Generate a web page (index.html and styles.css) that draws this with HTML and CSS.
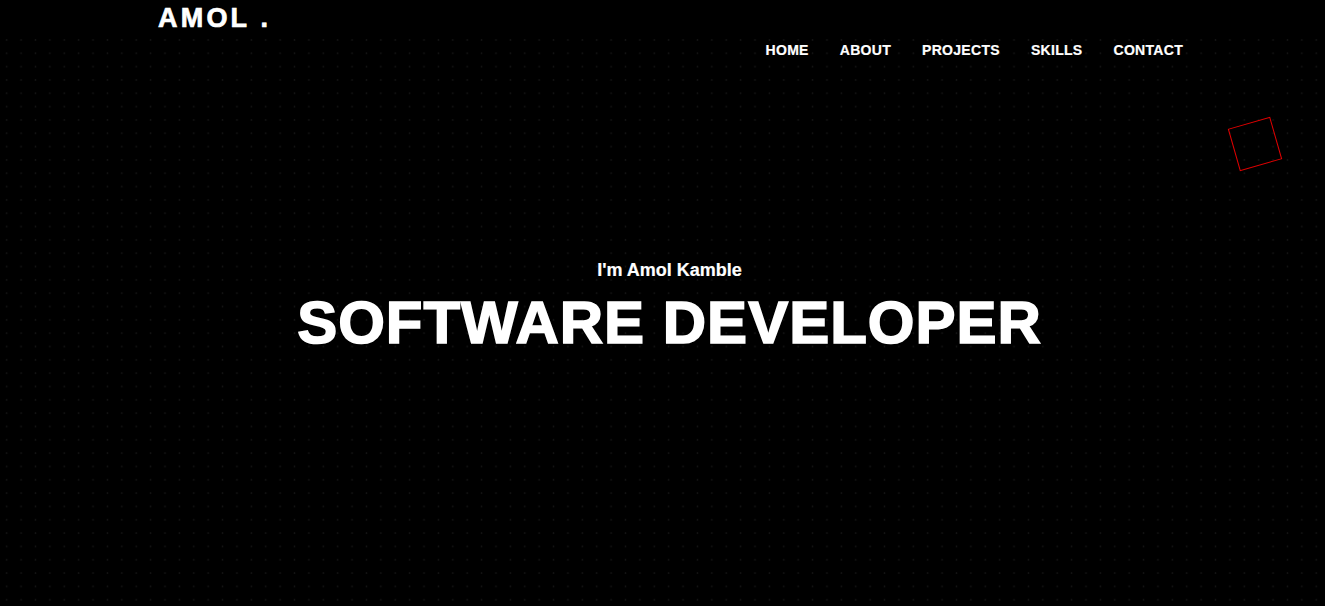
FILE: index.html
```html
<!DOCTYPE html>
<html lang="en">
<head>
<meta charset="utf-8">
<title>Amol Kamble</title>
<link rel="stylesheet" href="styles.css">
</head>
<body>
<div class="page">
  <header class="header">
    <div class="logo">AMOL .</div>
    <nav class="nav">
      <a href="#">HOME</a>
      <a href="#">ABOUT</a>
      <a href="#">PROJECTS</a>
      <a href="#">SKILLS</a>
      <a href="#">CONTACT</a>
    </nav>
  </header>
  <div class="shape"></div>
  <section class="hero">
    <p class="intro">I'm Amol Kamble</p>
    <h1 class="title">SOFTWARE DEVELOPER</h1>
  </section>
</div>
</body>
</html>
```

FILE: styles.css
```css
html, body {
  margin: 0;
  padding: 0;
  background: #000;
}
body {
  font-family: "Liberation Sans", Arial, sans-serif;
  color: #fff;
  width: 1325px;
  height: 606px;
  overflow: hidden;
}
.page {
  position: relative;
  height: 606px;
  background-color: #000;
  background-image: radial-gradient(circle at center, #171717 0, #121212 0.7px, rgba(0,0,0,0) 1.2px);
  background-size: 14.4px 13.33px;
  background-position: -0.5px 33.3px;
  background-repeat: repeat;
}
.page::before {
  content: "";
  position: absolute;
  left: 0;
  top: 0;
  right: 0;
  height: 34px;
  background: #000;
}
.header {
  position: relative;
  display: flex;
  justify-content: space-between;
  align-items: flex-start;
  padding: 0 142px 0 157px;
}
.logo {
  font-weight: 700;
  font-size: 27px;
  line-height: 36px;
  letter-spacing: 3.2px;
  -webkit-text-stroke: 0.7px #fff;
  padding-left: 1px;
}
.nav {
  display: flex;
  gap: 31px;
  padding-top: 41px;
}
.nav a {
  color: #fff;
  text-decoration: none;
  font-weight: 700;
  font-size: 14px;
  letter-spacing: 0.3px;
  line-height: 18px;
  -webkit-text-stroke: 0.2px #fff;
}
.shape {
  position: absolute;
  left: 1233px;
  top: 122px;
  width: 42px;
  height: 42px;
  border: 1px solid #e00000;
  transform: rotate(-16deg);
}
.hero {
  display: flex;
  flex-direction: column;
  align-items: center;
  padding-top: 200px;
  padding-left: 14px;
}
.intro {
  margin: 0;
  font-weight: 700;
  font-size: 18px;
  line-height: 22px;
  -webkit-text-stroke: 0.2px #fff;
}
.title {
  margin: 9px 0 0;
  font-weight: 700;
  font-size: 60px;
  line-height: 66px;
  letter-spacing: 1px;
  -webkit-text-stroke: 1.6px #fff;
}
```
